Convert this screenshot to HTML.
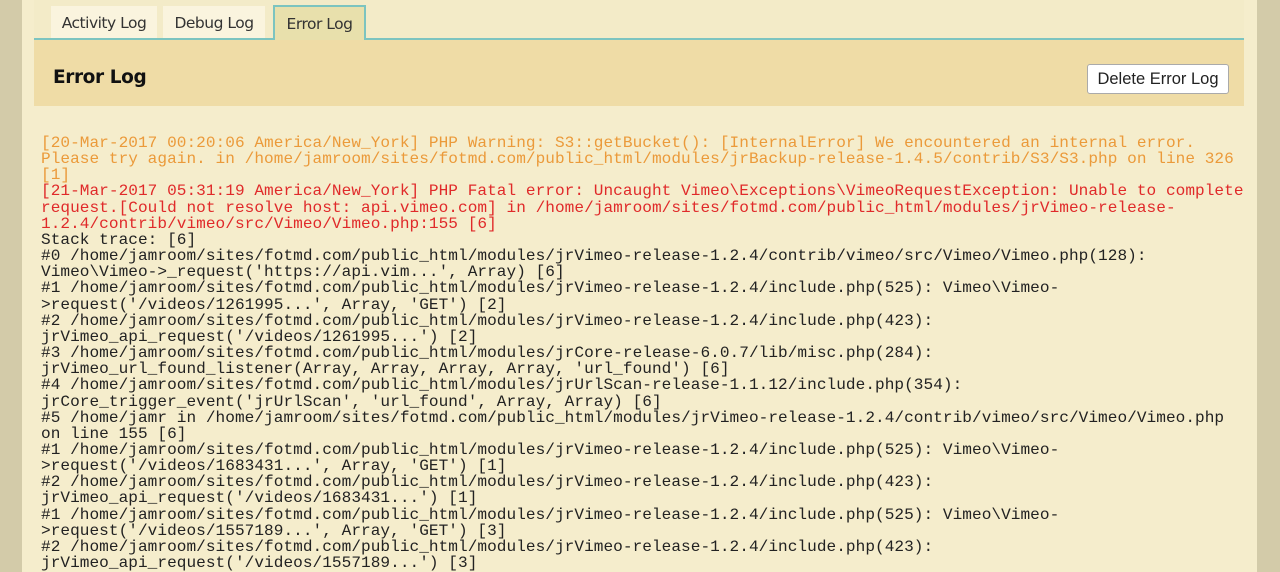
<!DOCTYPE html>
<html><head><meta charset="utf-8"><style>
html,body{margin:0;padding:0;width:1280px;height:572px;overflow:hidden;background:#f3ebc8;}
.lb{position:absolute;left:0;top:0;width:22px;height:572px;background:#d3cba9;}
.rb{position:absolute;left:1257px;top:0;width:23px;height:572px;background:#d3cba9;}
.panel{position:absolute;left:22px;top:0;width:1235px;height:572px;background:#f5edcc;}
.tabs{position:absolute;left:34px;top:0;width:1210px;height:38px;background:#f3ebc8;border-bottom:2px solid #7cc4c0;}
.tab{position:absolute;top:6px;height:32px;background:#faf4de;font:15.5px "DejaVu Sans","Liberation Sans",sans-serif;color:#333;line-height:34px;text-align:center;letter-spacing:-0.5px}
.tab.act{background:#e8e0ac;border:2px solid #7cc4c0;border-bottom:none;top:5px;height:33px;}
.hdr{position:absolute;left:34px;top:40px;width:1210px;height:66px;background:#efdca6;}
.hdr h1{position:absolute;left:19px;top:27px;margin:0;font:bold 18.5px "DejaVu Sans","Liberation Sans",sans-serif;color:#111;letter-spacing:-0.4px}
.btn{position:absolute;left:1053px;top:24px;width:140px;height:28px;background:#fff;border:1px solid #aaa;border-radius:3px;font:16.5px "Liberation Sans",sans-serif;color:#222;line-height:29px;text-align:center}
pre{position:absolute;left:41px;top:135px;margin:0;font:16.1px/16.15px "Liberation Mono",monospace;letter-spacing:0.04px;color:#222;white-space:pre;}
.o{color:#eb9a3a}.r{color:#e02a2a}
</style></head><body>
<div class="lb"></div><div class="rb"></div><div class="panel"></div>
<div class="tabs">
<div class="tab" style="left:17px;width:106px">Activity Log</div>
<div class="tab" style="left:129px;width:102px">Debug Log</div>
<div class="tab act" style="left:239px;width:89px">Error Log</div>
</div>
<div class="hdr"><h1>Error Log</h1><div class="btn">Delete Error Log</div></div>
<pre><span class="o">[20-Mar-2017 00:20:06 America/New_York] PHP Warning: S3::getBucket(): [InternalError] We encountered an internal error.
Please try again. in /home/jamroom/sites/fotmd.com/public_html/modules/jrBackup-release-1.4.5/contrib/S3/S3.php on line 326
[1]</span>
<span class="r">[21-Mar-2017 05:31:19 America/New_York] PHP Fatal error: Uncaught Vimeo\Exceptions\VimeoRequestException: Unable to complete
request.[Could not resolve host: api.vimeo.com] in /home/jamroom/sites/fotmd.com/public_html/modules/jrVimeo-release-
1.2.4/contrib/vimeo/src/Vimeo/Vimeo.php:155 [6]</span>
Stack trace: [6]
#0 /home/jamroom/sites/fotmd.com/public_html/modules/jrVimeo-release-1.2.4/contrib/vimeo/src/Vimeo/Vimeo.php(128):
Vimeo\Vimeo-&gt;_request('https://api.vim...', Array) [6]
#1 /home/jamroom/sites/fotmd.com/public_html/modules/jrVimeo-release-1.2.4/include.php(525): Vimeo\Vimeo-
&gt;request('/videos/1261995...', Array, 'GET') [2]
#2 /home/jamroom/sites/fotmd.com/public_html/modules/jrVimeo-release-1.2.4/include.php(423):
jrVimeo_api_request('/videos/1261995...') [2]
#3 /home/jamroom/sites/fotmd.com/public_html/modules/jrCore-release-6.0.7/lib/misc.php(284):
jrVimeo_url_found_listener(Array, Array, Array, Array, 'url_found') [6]
#4 /home/jamroom/sites/fotmd.com/public_html/modules/jrUrlScan-release-1.1.12/include.php(354):
jrCore_trigger_event('jrUrlScan', 'url_found', Array, Array) [6]
#5 /home/jamr in /home/jamroom/sites/fotmd.com/public_html/modules/jrVimeo-release-1.2.4/contrib/vimeo/src/Vimeo/Vimeo.php
on line 155 [6]
#1 /home/jamroom/sites/fotmd.com/public_html/modules/jrVimeo-release-1.2.4/include.php(525): Vimeo\Vimeo-
&gt;request('/videos/1683431...', Array, 'GET') [1]
#2 /home/jamroom/sites/fotmd.com/public_html/modules/jrVimeo-release-1.2.4/include.php(423):
jrVimeo_api_request('/videos/1683431...') [1]
#1 /home/jamroom/sites/fotmd.com/public_html/modules/jrVimeo-release-1.2.4/include.php(525): Vimeo\Vimeo-
&gt;request('/videos/1557189...', Array, 'GET') [3]
#2 /home/jamroom/sites/fotmd.com/public_html/modules/jrVimeo-release-1.2.4/include.php(423):
jrVimeo_api_request('/videos/1557189...') [3]</pre>
</body></html>
